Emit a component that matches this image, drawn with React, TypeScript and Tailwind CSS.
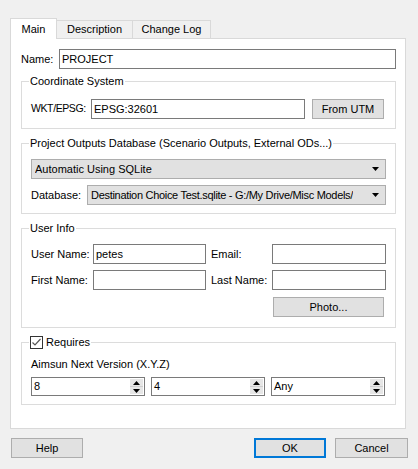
import React from 'react';

const font = { fontFamily: '"Liberation Sans", Arial, sans-serif' };

const TextBox: React.FC<{ value?: string; className?: string }> = ({ value = '', className = '' }) => (
  <div
    className={`h-[20px] border border-[#7a7a7a] bg-white px-[2px] text-[11px] leading-[18px] text-black ${className}`}
  >
    {value}
  </div>
);

const Button: React.FC<{ label: string; className?: string; focused?: boolean }> = ({
  label,
  className = '',
  focused,
}) => (
  <div
    className={`flex h-[20px] items-center justify-center bg-[#e1e1e1] text-[11px] text-black ${
      focused ? 'border-2 border-[#0078d7]' : 'border border-[#adadad]'
    } ${className}`}
  >
    {label}
  </div>
);

const ComboBox: React.FC<{ value: string; className?: string; textClass?: string }> = ({
  value,
  className = '',
  textClass = '',
}) => (
  <div
    className={`flex h-[20px] min-w-0 items-center justify-between border border-[#adadad] bg-[#e1e1e1] pl-[3px] pr-[6px] text-[11px] text-black ${className}`}
  >
    <span className={`overflow-hidden whitespace-nowrap ${textClass}`}>{value}</span>
    <svg width="7" height="4" viewBox="0 0 7 4" className="ml-[6px] shrink-0">
      <path d="M0 0h7L3.5 4z" fill="#000" />
    </svg>
  </div>
);

const SpinBox: React.FC<{ value: string; className?: string }> = ({ value, className = '' }) => (
  <div
    className={`flex h-[19px] items-stretch border border-[#7a7a7a] bg-white text-[11px] text-black ${className}`}
  >
    <span className="flex-1 pl-[2px] leading-[17px]">{value}</span>
    <div className="my-[1px] mr-[1px] flex w-[13px] flex-col bg-[#e6e6e6]">
      <div className="flex flex-1 items-center justify-center border-b border-[#cfcfcf]">
        <svg width="7" height="4" viewBox="0 0 7 4">
          <path d="M0 4h7L3.5 0z" fill="#000" />
        </svg>
      </div>
      <div className="flex flex-1 items-center justify-center">
        <svg width="7" height="4" viewBox="0 0 7 4">
          <path d="M0 0h7L3.5 4z" fill="#000" />
        </svg>
      </div>
    </div>
  </div>
);

const GroupBox: React.FC<{ legend: React.ReactNode; className?: string; children: React.ReactNode }> = ({
  legend,
  className = '',
  children,
}) => (
  <fieldset className={`min-w-0 border border-[#dcdcdc] px-[9px] ${className}`}>
    <legend className="-ml-[2px] px-[1px] text-[11px] leading-[16px] text-black">{legend}</legend>
    {children}
  </fieldset>
);

export default function App() {
  return (
    <div className="h-[469px] w-[418px] bg-[#f0f0f0] px-[10px] pt-[18px] text-black" style={font}>
      {/* Tabs */}
      <div className="flex items-end">
        <div className="relative z-10 -mb-px flex h-[21px] w-[47px] items-center justify-center border border-b-0 border-[#d9d9d9] bg-white text-[11px]">
          Main
        </div>
        <div className="flex h-[18px] w-[76px] items-center justify-center border border-l-0 border-b-0 border-[#d9d9d9] bg-[#f0f0f0] text-[11px]">
          Description
        </div>
        <div className="flex h-[18px] w-[78px] items-center justify-center border border-l-0 border-b-0 border-[#d9d9d9] bg-[#f0f0f0] text-[11px]">
          Change Log
        </div>
      </div>

      {/* Panel */}
      <div className="h-[391px] w-[396px] border border-[#d9d9d9] bg-white pb-[22px] pl-[10px] pr-[9px] pt-[10px]">
        <div className="flex items-center">
          <span className="w-[38px] shrink-0 text-[11px]">Name:</span>
          <TextBox value="PROJECT" className="flex-1" />
        </div>

        <GroupBox legend="Coordinate System" className="mt-[4px] pb-[9px] pt-[10px]">
          <div className="flex items-center">
            <span className="w-[60px] shrink-0 whitespace-nowrap text-[10.5px] tracking-[-0.4px]">WKT/EPSG:</span>
            <TextBox value="EPSG:32601" className="w-[214px]" />
            <Button label="From UTM" className="ml-[7px] w-[72px]" />
          </div>
        </GroupBox>

        <GroupBox legend="Project Outputs Database (Scenario Outputs, External ODs...)" className="mt-[6px] pb-[8px] pt-[8px]">
          <ComboBox value="Automatic Using SQLite" />
          <div className="mt-[6px] flex items-center">
            <span className="w-[56px] shrink-0 text-[11px]">Database:</span>
            <ComboBox
              value="Destination Choice Test.sqlite - G:/My Drive/Misc Models/"
              className="flex-1"
              textClass="tracking-[-0.3px]"
            />
          </div>
        </GroupBox>

        <GroupBox legend="User Info" className="mt-[6px] pb-[10px] pt-[8px]">
          <div className="grid grid-cols-[62px_113px_66px_114px] items-center gap-y-[6px]">
            <span className="text-[11px]">User Name:</span>
            <TextBox value="petes" />
            <span className="pl-[5px] text-[11px]">Email:</span>
            <TextBox />
            <span className="text-[11px]">First Name:</span>
            <TextBox />
            <span className="pl-[5px] text-[11px]">Last Name:</span>
            <TextBox />
          </div>
          <div className="mt-[7px] flex justify-end pr-[2px]">
            <Button label="Photo..." className="w-[111px]" />
          </div>
        </GroupBox>

        <GroupBox
          legend={
            <span className="flex items-center gap-[3px]">
              <svg width="13" height="13" viewBox="0 0 13 13">
                <rect x="0.5" y="0.5" width="12" height="12" fill="#fff" stroke="#333" />
                <path d="M2.5 6.5l2.5 2.5 5.5-6" fill="none" stroke="#555" strokeWidth="1.2" />
              </svg>
              Requires
            </span>
          }
          className="mt-[6px] pb-[8px] pt-[6px]"
        >
          <div className="text-[11px] leading-[16px]">Aimsun Next Version (X.Y.Z)</div>
          <div className="mt-[5px] flex gap-[6px]">
            <SpinBox value="8" className="w-[114px]" />
            <SpinBox value="4" className="w-[114px]" />
            <SpinBox value="Any" className="w-[114px]" />
          </div>
        </GroupBox>
      </div>

      {/* Bottom buttons */}
      <div className="mt-[9px] flex items-center">
        <Button label="Help" className="ml-px w-[72px]" />
        <div className="flex-1" />
        <Button label="OK" focused className="w-[72px]" />
        <Button label="Cancel" className="ml-[9px] w-[73px]" />
      </div>
    </div>
  );
}
